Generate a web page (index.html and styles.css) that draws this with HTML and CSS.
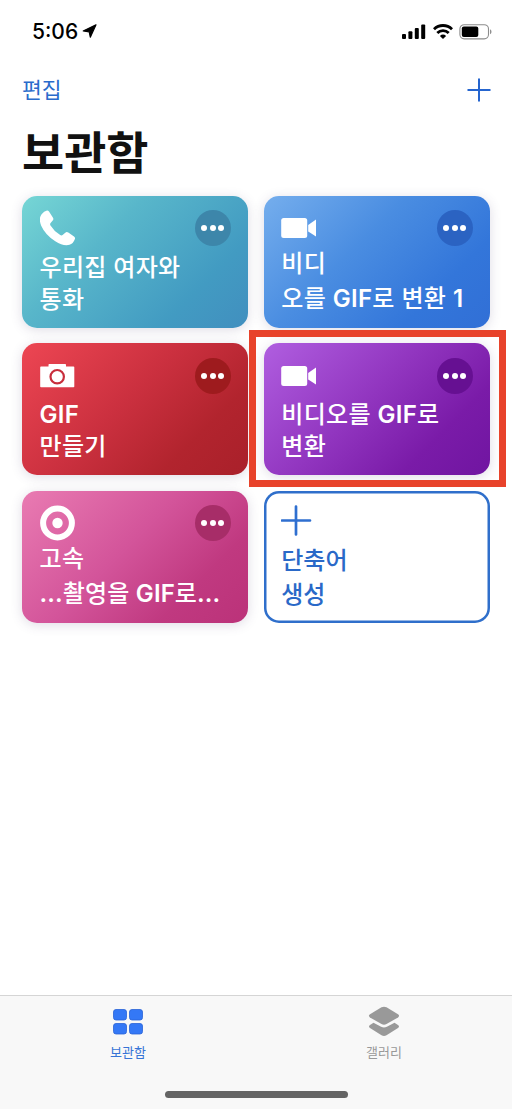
FILE: index.html
```html
<!DOCTYPE html>
<html lang="ko">
<head>
<meta charset="utf-8">
<title>보관함</title>
<link rel="stylesheet" href="styles.css">
</head>
<body>
<div class="screen">
  <header class="status">
    <div class="clock"><span>5:06</span>
      <svg class="location" width="15" height="15" viewBox="0 0 15 15"><path d="M14 .8 8.300 13.200 7.200 7.800 1.200 7Z" fill="#000" stroke="#000" stroke-width="1.200" stroke-linejoin="round"/></svg>
    </div>
    <div class="indicators">
      <svg width="24" height="16" viewBox="0 0 24 16"><rect y="10" width="4" height="5" rx="1"/><rect x="6.4" y="7.300" width="4" height="7.700" rx="1"/><rect x="12.800" y="4" width="4" height="11" rx="1"/><rect x="19.200" y=".500" width="4" height="14.500" rx="1"/></svg>
      <svg class="wifi" width="20" height="16" viewBox="0 0 20 16"><path d="M1 5.200a12.800 12.800 0 0 1 18 0M4.300 9a8.100 8.100 0 0 1 11.400 0" fill="none" stroke="#000" stroke-width="2.800"/><path d="M10 15 6.900 11.900a4.600 4.600 0 0 1 6.200 0Z"/></svg>
      <svg class="battery" width="34" height="16" viewBox="0 0 34 16"><rect x=".9" y=".7" width="28.600" height="14.200" rx="4.300" fill="none" stroke="#8c8c8c" stroke-width="1.100"/><rect x="2.800" y="2.600" width="16.500" height="10.400" rx="2"/><path d="M31.200 5.300v5c1.600-.8 1.600-4.200 0-5Z" fill="#777"/></svg>
    </div>
  </header>
  <nav class="toolbar">
    <span class="edit">편집</span>
    <svg width="24" height="24" viewBox="0 0 24 24"><path d="M12 .5v23M.5 12h23" stroke="#2565cf" stroke-width="2"/></svg>
  </nav>
  <h1 class="title">보관함</h1>
  <main class="grid">
    <article class="card teal">
      <div class="top">
        <svg class="icon" width="36" height="36" viewBox="0 0 36 36"><path d="M1.600 4.200Q4 .8 7 .4q1.200-.1 2 1l4 6.300q.9 1.600-.3 2.900l-2.100 2.300q-.9 1.100-.1 2.600 3.800 6.100 9.700 9.600 1.400.8 2.700-.3l2.400-2.100q1.400-1.100 3-.1l5.700 3.900q1.500 1.100.8 2.800-1.700 4.500-5.300 5.500-6.400 1.500-14.200-3.600Q5.500 25.200 1.200 15.700-1.700 8.600 1.600 4.200Z" fill="#fff"/></svg>
        <span class="more"><i></i><i></i><i></i></span>
      </div>
      <p class="name"><span>우리집 여자와</span><span>통화</span></p>
    </article>
    <article class="card blue">
      <div class="top">
        <svg class="icon" width="36" height="36" viewBox="0 0 36 36"><rect x=".2" y="8" width="26" height="20" rx="2.500" fill="#fff"/><path d="m27.200 15 7.800-5.500v17L27.200 21.500Z" fill="#fff"/></svg>
        <span class="more"><i></i><i></i><i></i></span>
      </div>
      <p class="name wide"><span>비디</span><span>오를 <b>GIF</b>로 변환 <b>1</b></span></p>
    </article>
    <article class="card red">
      <div class="top">
        <svg class="icon" width="36" height="36" viewBox="0 0 36 36"><path d="M1 8.500h7.500V6.700q0-.8.800-.8h15.900q.8 0 .8.800v1.800h7.500q.8 0 .8.800v19.200q0 .8-.8.800H1q-.8 0-.8-.8V9.300q0-.8.800-.8Z" fill="#fff"/><circle cx="17.200" cy="18.700" r="6.700" fill="none" stroke="#c82e3c" stroke-width="2.200"/></svg>
        <span class="more"><i></i><i></i><i></i></span>
      </div>
      <p class="name"><span><b>GIF</b></span><span>만들기</span></p>
    </article>
    <article class="card purple">
      <div class="top">
        <svg class="icon" width="36" height="36" viewBox="0 0 36 36"><rect x=".2" y="8" width="26" height="20" rx="2.500" fill="#fff"/><path d="m27.200 15 7.800-5.500v17L27.200 21.500Z" fill="#fff"/></svg>
        <span class="more"><i></i><i></i><i></i></span>
      </div>
      <p class="name"><span>비디오를 <b>GIF</b>로</span><span>변환</span></p>
      <div class="marker"></div>
    </article>
    <article class="card pink">
      <div class="top">
        <svg class="icon" width="36" height="36" viewBox="0 0 36 36"><circle cx="17.500" cy="18" r="14.400" fill="none" stroke="#fff" stroke-width="6"/><circle cx="17.500" cy="18" r="5.200" fill="#fff"/></svg>
        <span class="more"><i></i><i></i><i></i></span>
      </div>
      <p class="name wide"><span>고속</span><span class="clipped"><b>...</b>촬영을 <b>GIF</b>로<b>...</b></span></p>
    </article>
    <article class="card create">
      <div class="top">
        <svg class="icon" width="36" height="36" viewBox="0 0 36 36"><path d="M15 1.500v28M1 15.500h28" stroke="#2f6fd0" stroke-width="2.700" stroke-linecap="round"/></svg>
      </div>
      <p class="name"><span>단축어</span><span>생성</span></p>
    </article>
  </main>
  <footer class="tabs">
    <div class="tab active">
      <svg width="32" height="32" viewBox="0 0 32 32" fill="#3478f6" stroke="#2862d5" stroke-width=".8"><rect x="1.500" y="3.500" width="13" height="10.500" rx="2.500"/><rect x="17.500" y="3.500" width="13" height="10.500" rx="2.500"/><rect x="1.500" y="17.500" width="13" height="10.500" rx="2.500"/><rect x="17.500" y="17.500" width="13" height="10.500" rx="2.500"/></svg>
      <span>보관함</span>
    </div>
    <div class="tab">
      <svg width="32" height="32" viewBox="0 0 32 32" fill="#999"><path d="M13.500 1.300q2.500-1.100 5 0l11.500 6.900q2.200 1.600 0 3.200l-11.500 6.700q-2.500 1.300-5 0L2 11.400q-2.200-1.600 0-3.200Z"/><path d="m5.500 16.800 7.600 3.900q2.900 1.400 5.800 0l7.600-3.900 3.500 2.300q2 1.500 0 2.900l-11.500 7.200q-2.500 1.400-5 0L2 22q-2-1.400 0-2.900Z"/></svg>
      <span>갤러리</span>
    </div>
    <div class="home"></div>
  </footer>
</div>
</body>
</html>
```
FILE: styles.css
```css
* { box-sizing: border-box; margin: 0; }
body { background: #fff; font-family: Inter, "Noto Sans CJK KR", sans-serif; }
.screen { width: 512px; height: 1109px; display: flex; flex-direction: column; overflow: hidden; }
.status { height: 62px; padding: 1px 19.500px 0 32px; display: flex; justify-content: space-between; align-items: center; }
.clock { display: flex; align-items: center; gap: 4px; font-size: 21px; line-height: 26px; font-weight: 500; }
.indicators { display: flex; align-items: center; }
.wifi { margin-left: 7px; }
.battery { margin-left: 6px; }
.toolbar { height: 56px; padding: 0 21px 0 22px; display: flex; justify-content: space-between; align-items: center; }
.edit { color: #2a6bcb; font-size: 21.500px; line-height: 30px; font-weight: 400; }
.title { height: 77.500px; padding: 2px 0 0 22px; font-size: 45.800px; line-height: 68px; font-weight: 700; color: #111; }
.grid { flex: 1; padding: 0 22px; display: grid; grid-template-columns: 1fr 1fr; grid-auto-rows: 132px; gap: 15.500px; align-content: start; }
.card { position: relative; border-radius: 15px; padding: 14.500px 17.500px 0; color: #fff; display: flex; flex-direction: column; justify-content: space-between; box-shadow: 0 2px 12px rgba(80, 60, 110, .18); }
.top { display: flex; justify-content: space-between; }
.icon { display: block; }
.more { width: 36px; height: 36px; border-radius: 50%; display: flex; align-items: center; justify-content: center; gap: 2.300px; }
.more i { width: 6px; height: 6px; border-radius: 50%; background: #fff; }
.name { padding-bottom: 12px; font-size: 24px; font-weight: 500; letter-spacing: .3px; }
.name b { font-weight: 600; }
.name span { display: block; height: 32px; line-height: 32px; white-space: nowrap; }
.wide { padding-bottom: 13px; }
.wide span:first-child { height: 34.500px; }
.name .clipped { letter-spacing: .1px; }
.teal { background: linear-gradient(135deg, #76d6d5, #58b6ca 35%, #429bc2 75%, #418fbf); }
.teal .more { background: #3d86aa; }
.blue { background: linear-gradient(135deg, #75aeed, #4a8de1 40%, #3376da 75%, #316fd6); }
.blue .more { background: #2b63c2; }
.red { background: linear-gradient(135deg, #ed4653, #cb303f 45%, #b2242e 75%, #a9202a); }
.red .more { background: #9e1b1e; }
.purple { background: linear-gradient(135deg, #b05ee0, #9135bf 45%, #7a1ba8 75%, #7015a1); }
.purple .more { background: #661092; }
.pink { background: linear-gradient(135deg, #e97bb2, #d3549a 45%, #c03980 75%, #bb3279); }
.pink .more { background: #a72d68; }
.create { color: #2a69c8; box-shadow: inset 0 0 0 2.500px #2f6fcb; }
.create .name { letter-spacing: 0; }
.create .name span:first-child { height: 33.500px; }
.marker { position: absolute; inset: -13.500px -16px -12px -15px; border: 7px solid #e8432b; }
.tabs { position: relative; height: 114px; border-top: 1px solid #d5d5d5; background: #f8f8f8; display: flex; }
.tab { flex: 1; padding-top: 10px; display: flex; flex-direction: column; align-items: center; gap: 4px; color: #999; font-size: 13px; line-height: 20px; }
.active { color: #3674d6; }
.home { position: absolute; left: 165px; bottom: 11px; width: 183px; height: 7px; border-radius: 4px; background: #646464; }
```
